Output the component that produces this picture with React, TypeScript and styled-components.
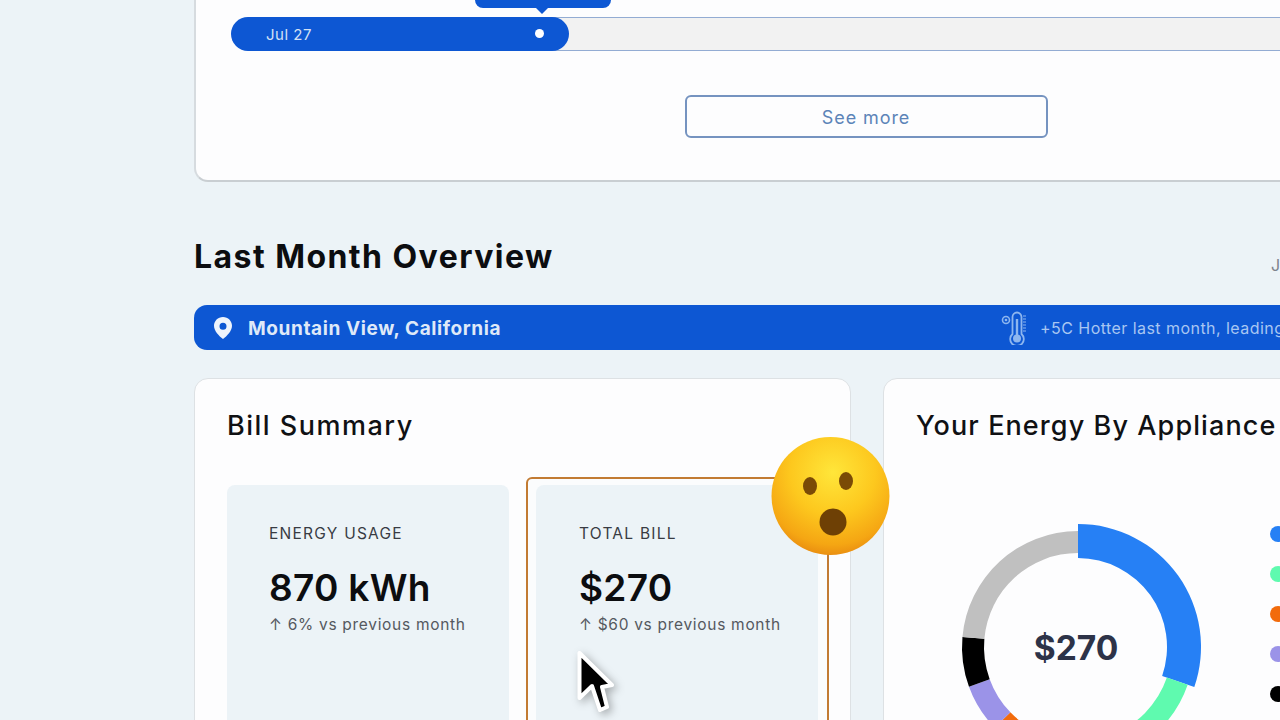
import styled, { createGlobalStyle } from "styled-components";

const GlobalStyle = createGlobalStyle`
  html, body {
    margin: 0;
    padding: 0;
    overflow: hidden;
  }
  body {
    font-family: "Inter", "Liberation Sans", sans-serif;
    background: #ecf3f7;
  }
`;

const Page = styled.div`
  position: relative;
  width: 1280px;
  height: 720px;
  overflow: hidden;
  padding-left: 194px;
  box-sizing: border-box;
  background: #ecf3f7;
`;

const Column = styled.div`
  width: 1346px;
  display: flex;
  flex-direction: column;
`;

const TopCard = styled.section`
  background: #fdfdfe;
  height: 182px;
  border-radius: 0 0 14px 14px;
  border: 2px solid #d6dbdf;
  border-top: none;
  border-bottom: 2px solid #c9ced2;
  box-sizing: border-box;
  padding: 17px 0 0 35px;
  display: flex;
  flex-direction: column;
`;

const Timeline = styled.div`
  position: relative;
  display: flex;
  height: 34px;
`;

const TimelineFill = styled.div`
  position: relative;
  width: 338px;
  flex: none;
  background: #0d57d3;
  border-radius: 17px;
  color: #d3e0f5;
  font-size: 15px;
  font-weight: 400;
  letter-spacing: 0.5px;
  line-height: 35px;
  padding-left: 35px;
  box-sizing: border-box;
  z-index: 1;
`;

const TimelineDot = styled.span`
  position: absolute;
  left: 304px;
  top: 12px;
  width: 9px;
  height: 9px;
  border-radius: 50%;
  background: #fff;
`;

const TimelineTrack = styled.div`
  flex: 1;
  margin-left: -18px;
  background: #f2f2f2;
  border-top: 1px solid #93acd3;
  border-bottom: 1px solid #93acd3;
`;

const Tooltip = styled.div`
  position: absolute;
  left: 244px;
  top: -37px;
  width: 136px;
  height: 28px;
  background: #0d57d3;
  border-radius: 8px;
  z-index: 2;
  &::after {
    content: "";
    position: absolute;
    left: 60px;
    bottom: -6px;
    border-left: 7px solid transparent;
    border-right: 7px solid transparent;
    border-top: 7px solid #0d57d3;
  }
`;

const SeeMoreRow = styled.div`
  display: flex;
  justify-content: center;
  margin: 44px 0 0 -37px;
`;

const SeeMore = styled.button`
  width: 363px;
  height: 43px;
  background: #fdfdfe;
  border: 2px solid #7593c0;
  border-radius: 6px;
  color: #5c84b8;
  font-family: inherit;
  font-size: 18px;
  font-weight: 400;
  letter-spacing: 0.9px;
  padding: 2px 0 0;
`;

const OverviewHead = styled.div`
  display: flex;
  align-items: center;
  justify-content: space-between;
  height: 60px;
  margin-top: 44px;
`;

const OverviewTitle = styled.h2`
  margin: 0;
  color: #0c0d10;
  font-size: 32px;
  font-weight: 700;
  letter-spacing: 1.45px;
`;

const DateLabel = styled.span`
  margin: 18px 0 0 0;
  position: relative;
  left: -269px;
  color: #7d838c;
  font-size: 16px;
  width: 0;
`;

const Banner = styled.div`
  display: flex;
  align-items: center;
  height: 45px;
  margin-top: 19px;
  padding-left: 19px;
  background: #0d57d3;
  border-radius: 13px;
`;

const Place = styled.span`
  width: 254px;
  flex: none;
  margin-left: 15px;
  padding-top: 1px;
  font-size: 19px;
  font-weight: 700;
  letter-spacing: 0.6px;
  white-space: nowrap;
  color: #dfe9f8;
`;

const Thermo = styled.svg`
  flex: none;
  margin-left: 499px;
`;

const Weather = styled.span`
  margin-left: 11px;
  padding-top: 1px;
  font-size: 16px;
  font-weight: 400;
  letter-spacing: 0.45px;
  white-space: nowrap;
  color: #a8c6f2;
`;

const Cards = styled.div`
  display: flex;
  gap: 32px;
  margin-top: 28px;
`;

const Card = styled.section<{ $width: number }>`
  width: ${(p) => p.$width}px;
  flex: none;
  height: 400px;
  box-sizing: border-box;
  padding: 32px 32px;
  background: #fdfdfe;
  border: 1px solid #dde1e4;
  border-radius: 14px;
`;

const CardTitle = styled.h3<{ $spacing: number }>`
  margin: 0;
  color: #101114;
  font-size: 27px;
  font-weight: 500;
  letter-spacing: ${(p) => p.$spacing}px;
  line-height: 30px;
  white-space: nowrap;
`;

const Tiles = styled.div`
  display: flex;
  align-items: flex-start;
  gap: 17px;
  margin-top: 44px;
`;

const TileBody = styled.div`
  box-sizing: border-box;
  flex: none;
  width: 282px;
  height: 300px;
  padding: 39px 42px;
  background: #ecf3f7;
  border-radius: 8px;
`;

const HighlightFrame = styled.div`
  box-sizing: border-box;
  flex: none;
  width: 303px;
  height: 300px;
  margin-top: -8px;
  padding: 6px 9px 0 8px;
  background: #fbfcfd;
  border: 2px solid #c27b33;
  border-radius: 6px;
`;

const TileInner = styled(TileBody)`
  padding-left: 43px;
`;

const TileLabel = styled.div`
  color: #383b43;
  font-size: 15.5px;
  font-weight: 400;
  line-height: 20px;
  letter-spacing: 1.25px;
`;

const TileValue = styled.div`
  margin-top: 24px;
  color: #0c0d10;
  font-size: 37px;
  font-weight: 600;
  line-height: 40px;
  letter-spacing: 0.3px;
`;

const TileDelta = styled.div`
  margin-top: 7px;
  color: #55595f;
  font-size: 15.5px;
  letter-spacing: 0.7px;
  line-height: 20px;
  white-space: nowrap;
`;

const ChartRow = styled.div`
  display: flex;
  align-items: flex-start;
  margin: 81px 0 0 37px;
`;

const Donut = styled.div`
  position: relative;
  width: 250px;
  height: 250px;
  flex: none;
`;

const DonutValue = styled.div`
  position: absolute;
  inset: 1px 4px 0 0;
  display: flex;
  align-items: center;
  justify-content: center;
  color: #2d3348;
  font-size: 33.5px;
  font-weight: 700;
`;

const Legend = styled.div`
  display: flex;
  flex-direction: column;
  gap: 24px;
  margin: 4px 0 0 67px;
`;

const LegendDot = styled.span<{ $color: string }>`
  width: 16px;
  height: 16px;
  border-radius: 50%;
  background: ${(p) => p.$color};
`;

const Emoji = styled.svg`
  position: absolute;
  left: 771px;
  top: 436px;
  z-index: 3;
`;

const Cursor = styled.svg`
  position: absolute;
  left: 570px;
  top: 640px;
  z-index: 4;
  filter: drop-shadow(3px 3px 4px rgba(0, 0, 0, 0.3));
`;

const segments = [
  { color: "#2680f5", from: 0, to: 109, outer: 123, inner: 89 },
  { color: "#5ffaaf", from: 109, to: 160, outer: 116, inner: 94 },
  { color: "#f26b0c", from: 160, to: 226, outer: 116, inner: 94 },
  { color: "#9b93e8", from: 226, to: 250, outer: 116, inner: 94 },
  { color: "#000000", from: 250, to: 275, outer: 116, inner: 94 },
  { color: "#c0c0c0", from: 275, to: 360, outer: 116, inner: 94 },
];

const polar = (r: number, deg: number) => {
  const a = (deg * Math.PI) / 180;
  return `${125 + r * Math.sin(a)} ${125 - r * Math.cos(a)}`;
};

const arcPath = (s: (typeof segments)[number]) => {
  const big = s.to - s.from > 180 ? 1 : 0;
  return `M${polar(s.outer, s.from)} A${s.outer} ${s.outer} 0 ${big} 1 ${polar(s.outer, s.to)} L${polar(s.inner, s.to)} A${s.inner} ${s.inner} 0 ${big} 0 ${polar(s.inner, s.from)} Z`;
};

const legendColors = ["#2680f5", "#5ffaaf", "#f26b0c", "#9b93e8", "#000000"];

const App = () => (
  <Page>
    <GlobalStyle />
    <Column>
      <TopCard>
        <Timeline>
          <Tooltip />
          <TimelineFill>
            Jul 27
            <TimelineDot />
          </TimelineFill>
          <TimelineTrack />
        </Timeline>
        <SeeMoreRow>
          <SeeMore>See more</SeeMore>
        </SeeMoreRow>
      </TopCard>

      <OverviewHead>
        <OverviewTitle>Last Month Overview</OverviewTitle>
        <DateLabel>Jul</DateLabel>
      </OverviewHead>

      <Banner>
        <svg width="20" height="24" viewBox="0 0 20 24">
          <path
            fillRule="evenodd"
            d="M10 1C4.900 1 1 5 1 9.800c0 5 5 10.400 9 13.200 4-2.800 9-8.200 9-13.200C19 5 15.100 1 10 1Zm0 5.700a3.500 3.500 0 1 1 0 7 3.500 3.500 0 0 1 0-7Z"
            fill="#eef4fc"
          />
        </svg>
        <Place>Mountain View, California</Place>
        <Thermo width="28" height="34" viewBox="0 0 28 34" fill="none">
          <circle cx="5" cy="9" r="3.500" stroke="#8db6ef" strokeWidth="1.600" />
          <circle cx="5" cy="9" r="1.300" fill="#8db6ef" />
          <path
            d="M11.500 6a4.500 4.500 0 0 1 9 0v17a6.800 6.800 0 1 1-9 0V6Z"
            stroke="#8db6ef"
            strokeWidth="1.800"
          />
          <circle cx="16" cy="27.500" r="4" fill="#8db6ef" />
          <path d="M16 8v18" stroke="#8db6ef" strokeWidth="2.400" />
          <path
            d="M22 5h3M22 8h3M22 11h3M22 14h3M22 17h3M22 20h3"
            stroke="#8db6ef"
            strokeWidth="1.200"
          />
        </Thermo>
        <Weather>+5C Hotter last month, leading to higher energy usage</Weather>
      </Banner>

      <Cards>
        <Card $width={657}>
          <CardTitle $spacing={1.5}>Bill Summary</CardTitle>
          <Tiles>
            <TileBody>
              <TileLabel>ENERGY USAGE</TileLabel>
              <TileValue>870 kWh</TileValue>
              <TileDelta>↑ 6% vs previous month</TileDelta>
            </TileBody>
            <HighlightFrame>
              <TileInner>
                <TileLabel>TOTAL BILL</TileLabel>
                <TileValue>$270</TileValue>
                <TileDelta>↑ $60 vs previous month</TileDelta>
              </TileInner>
            </HighlightFrame>
          </Tiles>
        </Card>
        <Card $width={656}>
          <CardTitle $spacing={1.1}>Your Energy By Appliance</CardTitle>
          <ChartRow>
            <Donut>
              <svg width="250" height="250" viewBox="0 0 250 250">
                {segments.map((s) => (
                  <path key={s.color} d={arcPath(s)} fill={s.color} />
                ))}
              </svg>
              <DonutValue>$270</DonutValue>
            </Donut>
            <Legend>
              {legendColors.map((c) => (
                <LegendDot key={c} $color={c} />
              ))}
            </Legend>
          </ChartRow>
        </Card>
      </Cards>
    </Column>

    <Emoji width="120" height="120" viewBox="0 0 120 120">
      <defs>
        <radialGradient id="face" cx="52%" cy="30%" r="72%">
          <stop offset="0%" stopColor="#ffe63a" />
          <stop offset="50%" stopColor="#fdc81e" />
          <stop offset="85%" stopColor="#f5a613" />
          <stop offset="100%" stopColor="#e88a10" />
        </radialGradient>
      </defs>
      <circle cx="59.500" cy="60" r="59" fill="url(#face)" />
      <ellipse cx="39" cy="50" rx="7" ry="9" fill="#7a4a06" />
      <ellipse cx="75" cy="45" rx="7" ry="9" fill="#7a4a06" />
      <circle cx="62" cy="86" r="13.500" fill="#6e4005" />
    </Emoji>

    <Cursor width="54" height="80" viewBox="0 0 54 80">
      <path
        d="M9.500 13V58L22 46l8 24 7-3-5-20 10-2Z"
        fill="#000"
        stroke="#fff"
        strokeWidth="4"
        strokeLinejoin="round"
      />
    </Cursor>
  </Page>
);

export default App;
